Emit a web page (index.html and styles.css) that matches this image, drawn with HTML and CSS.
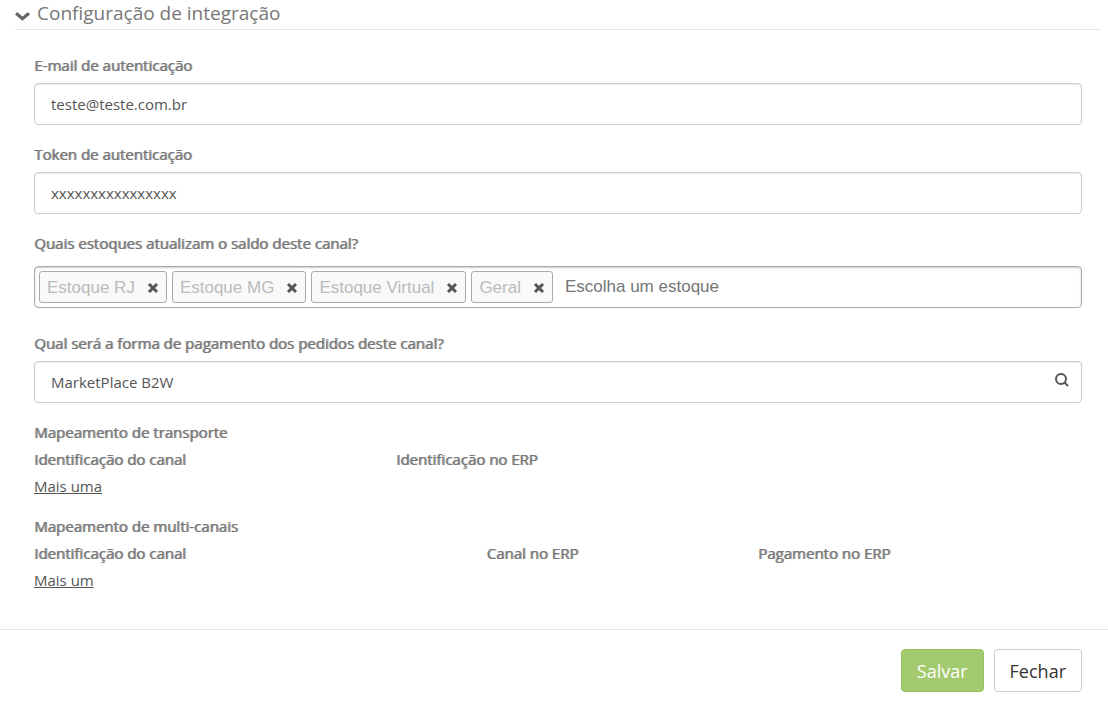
FILE: index.html
```
<!DOCTYPE html>
<html lang="pt-BR">
<head>
  <meta charset="UTF-8" />
  <meta name="viewport" content="width=device-width, initial-scale=1.0" />
  <title>Configuração de integração</title>
  <link rel="stylesheet" href="styles.css">
</head>
<body>
  <form class="config">
    <h2 class="section-title">
      <svg class="chevron" viewBox="0 0 14 9" aria-hidden="true"><path d="M1 2l6 5 6-5" /></svg>
      Configuração de integração
    </h2>

    <div class="fields">
      <div class="field">
        <label for="email">E-mail de autenticação</label>
        <input class="control" type="text" id="email" value="teste@teste.com.br" />
      </div>
      <div class="field">
        <label for="token">Token de autenticação</label>
        <input class="control" type="text" id="token" value="xxxxxxxxxxxxxxxx" />
      </div>
      <div class="field stocks">
        <label for="stock">Quais estoques atualizam o saldo deste canal?</label>
        <div class="tag-box">
          <span class="tag">Estoque RJ <button type="button" class="remove" aria-label="Remover Estoque RJ"><svg viewBox="0 0 12 12"><path d="M2 2l8 8M10 2l-8 8" /></svg></button></span>
          <span class="tag">Estoque MG <button type="button" class="remove" aria-label="Remover Estoque MG"><svg viewBox="0 0 12 12"><path d="M2 2l8 8M10 2l-8 8" /></svg></button></span>
          <span class="tag">Estoque Virtual <button type="button" class="remove" aria-label="Remover Estoque Virtual"><svg viewBox="0 0 12 12"><path d="M2 2l8 8M10 2l-8 8" /></svg></button></span>
          <span class="tag">Geral <button type="button" class="remove" aria-label="Remover Geral"><svg viewBox="0 0 12 12"><path d="M2 2l8 8M10 2l-8 8" /></svg></button></span>
          <input class="tag-input" type="text" id="stock" placeholder="Escolha um estoque" />
        </div>
      </div>
      <div class="field">
        <label for="payment">Qual será a forma de pagamento dos pedidos deste canal?</label>
        <div class="control search">
          <input type="text" id="payment" value="MarketPlace B2W" />
          <button type="button" aria-label="Pesquisar">
            <svg viewBox="0 0 14 14"><circle cx="6" cy="6" r="5" /><path d="M9 9l4 4" /></svg>
          </button>
        </div>
      </div>
    </div>

    <div class="mapping">
      <table>
        <caption>Mapeamento de transporte</caption>
        <tr>
          <th class="col-4">Identificação do canal</th>
          <th class="col-8">Identificação no ERP</th>
        </tr>
      </table>
      <a href="#">Mais uma</a>
    </div>

    <div class="mapping">
      <table>
        <caption>Mapeamento de multi-canais</caption>
        <tr>
          <th class="col-5">Identificação do canal</th>
          <th class="col-3">Canal no ERP</th>
          <th class="col-4">Pagamento no ERP</th>
        </tr>
      </table>
      <a href="#">Mais um</a>
    </div>

    <div class="actions">
      <button type="submit" class="btn save">Salvar</button>
      <button type="button" class="btn">Fechar</button>
    </div>
  </form>
</body>
</html>
```
FILE: styles.css
```
* {
  box-sizing: border-box;
}
body {
  margin: 0;
  font-family: "Open Sans", sans-serif;
  font-size: 15px;
  line-height: 27px;
  background: #fff;
  color: #555;
}
input, button {
  font-family: inherit;
  font-size: inherit;
  color: inherit;
}
svg {
  display: block;
  fill: none;
  stroke: currentColor;
}
.section-title {
  display: flex;
  align-items: center;
  gap: 7px;
  margin: 0 7px 22px 15px;
  padding-bottom: 2px;
  border-bottom: 1px solid #e5e5e5;
  font-size: 19px;
  font-weight: 400;
  color: #777;
}
.chevron {
  width: 15px;
  height: 10px;
  margin-top: 4px;
  stroke: #666;
  stroke-width: 3;
}
.fields {
  padding: 0 26px 0 34px;
}
.field {
  margin-bottom: 16px;
}
.field label {
  display: block;
  margin-bottom: 4px;
}
.field label, caption, th {
  font-weight: 400;
  color: #777;
  text-shadow: 1px 0 #999;
}
.control {
  display: block;
  width: 100%;
  height: 42px;
  padding: 0 16px;
  border: 1px solid #ccc;
  border-radius: 4px;
  background: #fff;
  box-shadow: inset 0 1px 1px rgba(0, 0, 0, 0.08);
}
.search {
  display: flex;
  align-items: center;
  padding-right: 12px;
}
.search input {
  flex: 1;
  min-width: 0;
  padding: 0;
  border: 0;
  background: none;
}
.search button {
  padding: 0 0 4px;
  border: 0;
  background: none;
}
.search svg {
  width: 14px;
  height: 14px;
  stroke-width: 2;
}
.stocks {
  margin-bottom: 22px;
}
.stocks .tag-box {
  margin-top: 9px;
}
.tag-box {
  display: flex;
  flex-wrap: wrap;
  gap: 5px;
  padding: 4px;
  border: 1px solid #aaa;
  border-radius: 4px;
  box-shadow: inset 0 1px 2px rgba(0, 0, 0, 0.2);
  font-family: "Liberation Sans", sans-serif;
  font-size: 17px;
}
.tag {
  display: flex;
  align-items: center;
  gap: 12px;
  height: 32px;
  padding: 0 7px;
  border: 1px solid #aaa;
  border-radius: 3px;
  background: #f9f9f9;
  color: #bbb;
}
.remove {
  padding: 2px 0 0;
  border: 0;
  background: none;
  color: #555;
}
.remove svg {
  width: 12px;
  height: 12px;
  stroke-width: 3;
}
.tag-input {
  flex: 1;
  min-width: 160px;
  padding: 0 7px;
  border: 0;
  background: none;
}
.tag-input::placeholder {
  color: #757575;
}
.mapping {
  margin: 0 7px 13px 15px;
}
.mapping table {
  width: 100%;
  table-layout: fixed;
  border-collapse: collapse;
}
caption, th {
  padding: 0 19px;
  text-align: left;
}
.col-3 {
  width: 25%;
}
.col-4 {
  width: 33.3333%;
}
.col-5 {
  width: 41.6667%;
}
.col-8 {
  width: 66.6667%;
}
.mapping a {
  margin-left: 19px;
  color: #555;
}
.actions {
  display: flex;
  justify-content: flex-end;
  gap: 10px;
  margin-top: 35px;
  padding: 19px 26px 11px;
  border-top: 1px solid #e5e5e5;
}
.btn {
  height: 43px;
  padding: 0 15px;
  border: 1px solid #ccc;
  border-radius: 4px;
  background: #fff;
  font-size: 18px;
  color: #333;
}
.save {
  border-color: #98c35c;
  background: #a4ca6f;
  color: #fff;
}
```
